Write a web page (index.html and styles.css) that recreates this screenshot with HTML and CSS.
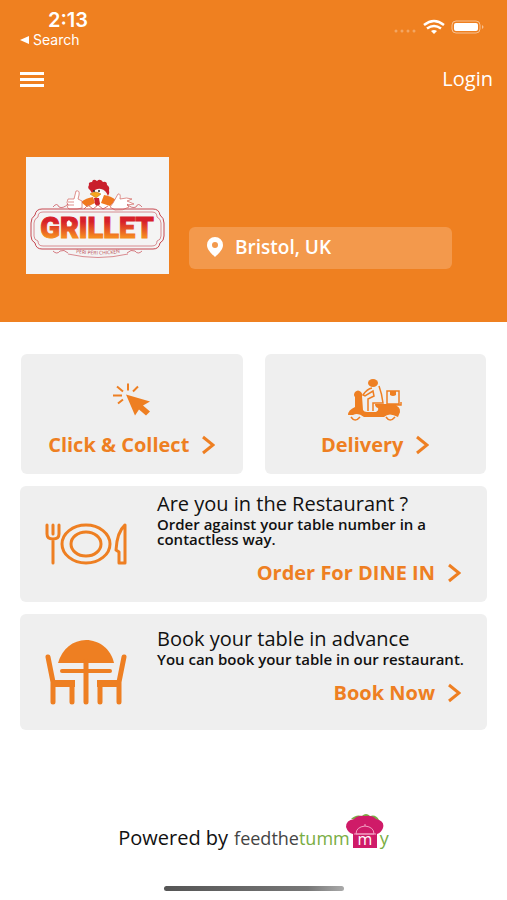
FILE: index.html
```html
<!DOCTYPE html>
<html lang="en">
<head>
    <meta charset="utf-8">
    <meta name="viewport" content="width=device-width, initial-scale=1">
    <title>Grillet</title>
    <link rel="stylesheet" href="styles.css">
</head>
<body>
    <header class="top">
        <div class="status-bar">
            <div class="status-left">
                <div class="clock">2:13</div>
                <a href="#" class="back-link"><svg width="9" height="8" viewBox="0 0 9 8"><path d="M9 0v8L0 4z" fill="#fff"/></svg>Search</a>
            </div>
            <svg class="status-icons" width="92" height="16" viewBox="0 0 92 16">
                <g fill="#fff" opacity=".3">
                    <circle cx="3" cy="12" r="1.5"/><circle cx="9" cy="12" r="1.5"/><circle cx="15" cy="12" r="1.5"/><circle cx="21" cy="12" r="1.5"/>
                </g>
                <g fill="none" stroke="#fff" stroke-width="2.5">
                    <path d="M31 6q10-8 20 0"/>
                    <path d="M34 9.500q7-5 14 0"/>
                </g>
                <path d="M38 12q3-2 6 0l-3 3z" fill="#fff"/>
                <rect x="59" y="2" width="28" height="12" rx="4" fill="none" stroke="#fff" opacity=".5"/>
                <rect x="61" y="4" width="24" height="8" rx="2" fill="#fff"/>
                <path d="M89 6q3 2 0 4z" fill="#fff" opacity=".5"/>
            </svg>
        </div>

        <nav class="nav">
            <button class="menu-button" aria-label="Menu"><span></span><span></span><span></span></button>
            <a href="#" class="login">Login</a>
        </nav>

        <div class="hero">
            <svg class="logo" width="143" height="117" viewBox="0 0 143 117">
                <defs>
                    <linearGradient id="fire" gradientUnits="userSpaceOnUse" x1="0" y1="58" x2="0" y2="80">
                        <stop offset=".3" stop-color="#d7202a"/>
                        <stop offset="1" stop-color="#f58a20"/>
                    </linearGradient>
                </defs>
                <rect width="143" height="117" fill="#f4f4f4"/>
                <!-- rooster -->
                <path d="M56 50q2-7 8-10 0-7 6-7 7-1 9 6 5 4 11 11l-8 3H57z" fill="#fff"/>
                <path d="M64 33q-3-2-1-5-1-3 3-3 1-4 5-1 3-3 6 1 4-1 4 3 3 2 2 5 1 3-1 6-2-6-7-7-5-1-9 4z" fill="#c91f2c"/>
                <path d="M55 45q5-4 12-5l2 6-8 4zM78 38q7 1 12 5l-6 6-9-3z" fill="#f0791f"/>
                <path d="M64 37q5-4 11 0l-5 4z" fill="#f6a71c" stroke="#b96a1a" stroke-width=".5"/>
                <circle cx="68" cy="34" r="1" fill="#222"/><circle cx="73" cy="34" r="1" fill="#222"/>
                <path d="M68 41h5l1 6q-3 4-5 0z" fill="#c91f2c"/>
                <g fill="#fff" stroke="#d77570" stroke-width=".8">
                    <path d="M42 42h6l2-8q4-1 3 4l-1 4 4 2v7l-5 1h-8q-3-2-1-4-2-2 0-6zM42 45h6M42 48h6"/>
                    <path d="M87 46l5-9q3-1 2 5 7-2 12 0l-5 2 7 3-7 1 2 2q-6 4-14 3l-5-3z"/>
                </g>
                <path d="M58 52l4-4 5 4 5-4 5 4 5-3" fill="none" stroke="#d77570"/>
                <!-- frame -->
                <g fill="none" stroke="#c6464e">
                    <path d="M16 52h111q6 0 7 6 4 3 4 8v13q0 5-4 7-1 6-7 6H16q-6 0-7-6-4-2-4-7V66q0-5 4-8 1-6 7-6z"/>
                    <path d="M17 55h109q5 0 5 5 4 2 4 6v13q0 4-4 5 0 5-5 5H17q-5 0-5-5-4-1-4-5V66q0-4 4-6 0-5 5-5z" opacity=".6"/>
                    <path d="M27 50q4-5 6 0 4 2 9-3M116 50q-4-5-6 0-4 2-9-3M27 94q4 4 7 0 4-2 8 2M116 94q-4 4-7 0-4-2-8 2" opacity=".7"/>
                    <path d="M42 97q30 7 60 0" opacity=".6"/>
                </g>
                <text x="71" y="81" class="logo-name" text-anchor="middle" fill="url(#fire)" stroke="url(#fire)">GRILLET</text>
                <path d="M42 69q-3-3 1-6 4 4 1 6z" fill="#fff"/>
                <path id="arc" d="M40 94q31 7 64 0" fill="none"/>
                <text class="logo-tag" text-anchor="middle" fill="#b94850"><textPath href="#arc" startOffset="50%">PERI PERI CHICKEN</textPath></text>
            </svg>
            <button class="location">
                <svg width="16" height="20" viewBox="0 0 16 20"><path fill="#fff" fill-rule="evenodd" d="M8 0a8 8 0 0 1 8 8c0 5-5 9-8 12C5 17 0 13 0 8a8 8 0 0 1 8-8zm0 5a3 3 0 1 0 0 6 3 3 0 0 0 0-6z"/></svg>
                Bristol, UK
            </button>
        </div>
    </header>

    <main class="content">
        <div class="tiles">
            <a href="#" class="tile">
                <svg class="tile-icon" width="38" height="32" viewBox="0 0 38 32">
                    <path d="M13 11l24 7-7 4 7 6-4 4-7-6-4 6z" fill="#ee7f22"/>
                    <path d="M15 0v7M4 3l6 5M25 3l-5 5M0 12h9M10 16l-5 4" fill="none" stroke="#ee7f22" stroke-width="2"/>
                </svg>
                <span class="action">Click &amp; Collect <svg class="chevron" viewBox="0 0 14 20"><path d="M2 2l10 8-10 8"/></svg></span>
            </a>
            <a href="#" class="tile">
                <svg class="tile-icon" width="54" height="43" viewBox="0 0 54 43">
                    <g fill="#ee7f22">
                        <ellipse cx="25" cy="5" rx="5" ry="4"/>
                        <path d="M7 14q3-3 6 0 2 2 1 4l1 14q1 2 4 2h9q3-2 2-4-3-1-3-4h19q5 2 6 8l-2 5q-9-5-14 0H16q-6-5-11-2H0q0-5 7-8V19q-2-2 0-5z"/>
                        <path d="M42 13h6v4q-3 2-6 0z"/>
                    </g>
                    <path d="M20 22l5-2v8q1 3 5 5h-9z" fill="#efefef"/>
                    <g fill="none" stroke="#ee7f22" stroke-width="1.500">
                        <path d="M31 8q3 8 4 17H25v8M20 33V21l6-3-1-5-8 5-2-1q4-6 9-7"/>
                        <path d="M39 13h12v13H39zM36 27h17v-3M48 29q5 1 2 7"/>
                        <path d="M3 39q4 6 9 0M38 39q4 6 9 0"/>
                    </g>
                </svg>
                <span class="action">Delivery <svg class="chevron" viewBox="0 0 14 20"><path d="M2 2l10 8-10 8"/></svg></span>
            </a>
        </div>

        <section class="panel">
            <svg class="panel-icon" width="82" height="42" viewBox="0 0 82 42">
                <g fill="none" stroke="#ee7f22" stroke-width="3" stroke-linecap="round" stroke-linejoin="round">
                    <path d="M2 2v9q0 5 6 5t6-5V2M8 2v9M8 16v24"/>
                    <ellipse cx="41" cy="21" rx="24" ry="19"/>
                    <ellipse cx="41" cy="21" rx="15" ry="12"/>
                    <path d="M80 2v38h-6V29l-3-2q1-18 9-25z"/>
                </g>
            </svg>
            <div class="panel-body">
                <h2>Are you in the Restaurant ?</h2>
                <p>Order against your table number in a contactless way.</p>
                <a href="#" class="action">Order For DINE IN <svg class="chevron" viewBox="0 0 14 20"><path d="M2 2l10 8-10 8"/></svg></a>
            </div>
        </section>

        <section class="panel">
            <svg class="panel-icon" width="82" height="66" viewBox="0 0 82 66">
                <path d="M13 24C17 10 28 1 41 1s25 9 28 23z" fill="#ee7f22"/>
                <g fill="none" stroke="#ee7f22" stroke-width="5" stroke-linecap="round">
                    <path d="M41 22v41"/>
                    <path d="M17 32h48" stroke-width="4"/>
                    <path d="M3 18l5 25v20M79 18l-5 25v20M27 46v17M55 46v17"/>
                </g>
                <path d="M6 41h24v7H6zM76 41H52v7h24z" fill="#ee7f22"/>
            </svg>
            <div class="panel-body">
                <h2>Book your table in advance</h2>
                <p>You can book your table in our restaurant.</p>
                <a href="#" class="action">Book Now <svg class="chevron" viewBox="0 0 14 20"><path d="M2 2l10 8-10 8"/></svg></a>
            </div>
        </section>
    </main>

    <footer class="footer">
        <div class="powered">
            <span>Powered by</span>
            <a href="#" class="brand">
                <span>feedthe</span><span class="green">tumm</span>
                <svg class="chef-hat" width="38" height="36" viewBox="0 0 38 36">
                    <path d="M5 5q5-5 11-3 4-4 8 0 6-2 9 4z" fill="#79ad43"/>
                    <path d="M19 2q7-1 11 3 9 2 7 9-2 5-6 6v14H7V20q-5-1-7-7 0-7 8-8 4-4 11-3z" fill="#cf1b68"/>
                    <path d="M10 20q0-7 9-8 9 1 9 8zM19 12v-2M8 20h22" fill="none" stroke="#f3a3c4"/>
                    <text x="19" y="31" text-anchor="middle" class="brand-m">m</text>
                </svg>
                <span class="green">y</span>
            </a>
        </div>
        <div class="home-bar"></div>
    </footer>
</body>
</html>
```
FILE: styles.css
```css
* {
    box-sizing: border-box;
}

body {
    display: flex;
    flex-direction: column;
    min-height: 100vh;
    margin: 0;
    font-family: "Open Sans", sans-serif;
    color: #111;
    background-color: #fff;
}

a {
    color: inherit;
    text-decoration: none;
}

svg {
    flex-shrink: 0;
}

.top {
    padding: 10px 14px 48px 20px;
    background-color: #ef8020;
    color: #fff;
}

.status-bar {
    display: flex;
    justify-content: space-between;
    font-family: Inter, sans-serif;
}

.clock {
    padding-left: 28px;
    font-size: 20px;
    line-height: 20px;
    font-weight: 600;
}

.back-link {
    display: flex;
    align-items: center;
    gap: 4px;
    font-size: 14px;
    line-height: 20px;
}

.status-icons {
    margin-top: 9px;
    margin-right: 8px;
}

.nav {
    display: flex;
    justify-content: space-between;
    align-items: center;
    margin-top: 17px;
}

.menu-button {
    display: flex;
    flex-direction: column;
    gap: 3px;
    padding: 0;
    border: none;
    background: none;
    cursor: pointer;
}

.menu-button span {
    width: 24px;
    height: 3px;
    background-color: #fff;
}

.login {
    font-size: 20px;
    line-height: 24px;
}

.hero {
    display: flex;
    align-items: flex-end;
    gap: 20px;
    margin-top: 66px;
    padding: 0 41px 0 6px;
}

.logo-name {
    font-family: Roboto, sans-serif;
    font-size: 29px;
    font-weight: 900;
}

.logo-tag {
    font-size: 5px;
}

.location {
    display: flex;
    flex: 1;
    align-items: center;
    gap: 12px;
    height: 42px;
    margin-bottom: 5px;
    padding: 0 18px 2px;
    border: none;
    border-radius: 6px;
    background-color: #f3994c;
    color: #fff;
    font-family: inherit;
    font-size: 19px;
    font-weight: 600;
}

.content {
    display: flex;
    flex-direction: column;
    gap: 12px;
    padding: 32px 20px 0;
}

.tiles {
    display: grid;
    grid-template-columns: 1fr 1fr;
    gap: 22px;
    padding: 0 1px;
}

.tile {
    display: flex;
    flex-direction: column;
    justify-content: flex-end;
    align-items: center;
    gap: 12px;
    min-height: 120px;
    padding-bottom: 17px;
    border-radius: 6px;
    background-color: #efefef;
}

.tile-icon {
    height: 43px;
}

.action {
    display: flex;
    align-items: center;
    gap: 12px;
    color: #ee7f22;
    font-size: 20px;
    line-height: 24px;
    font-weight: bold;
}

.chevron {
    width: 14px;
    height: 20px;
    fill: none;
    stroke: #ee7f22;
    stroke-width: 3;
}

.panel {
    display: flex;
    align-items: center;
    gap: 30px;
    min-height: 116px;
    padding: 0 8px 0 25px;
    border-radius: 6px;
    background-color: #efefef;
}

.panel-body {
    flex: 1;
    padding-bottom: 12px;
}

.panel h2 {
    margin: 0 0 1px;
    font-size: 20px;
    line-height: 24px;
    font-weight: 400;
}

.panel p {
    margin: 0;
    font-size: 15px;
    line-height: 15px;
    font-weight: 600;
}

.panel .action {
    justify-content: flex-end;
    margin-top: 14px;
    padding-right: 18px;
}

.footer {
    display: flex;
    flex: 1;
    flex-direction: column;
    justify-content: space-between;
    align-items: center;
    padding: 84px 0 9px;
}

.powered,
.brand {
    display: flex;
    align-items: flex-end;
}

.powered {
    gap: 6px;
    font-size: 20px;
    line-height: 24px;
}

.brand {
    font-size: 18px;
    font-weight: 400;
    color: #444;
}

.green {
    color: #79ad43;
}

.chef-hat {
    margin: 0 -4px;
}

.brand-m {
    font-size: 16px;
    fill: #fff;
}

.home-bar {
    width: 180px;
    height: 5px;
    border-radius: 3px;
    background: linear-gradient(90deg, #555, #777 80%, #aaa);
}
```
